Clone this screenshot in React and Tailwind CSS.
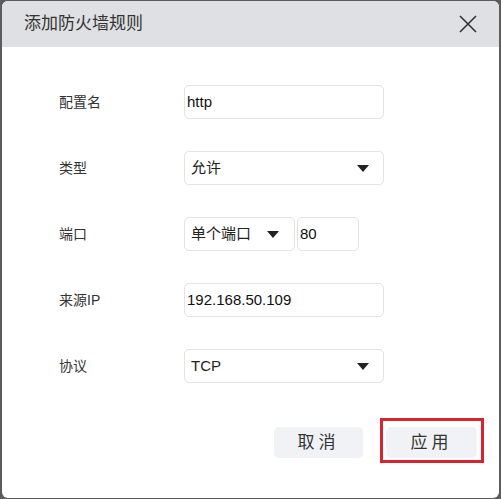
import React from "react";

const font = { fontFamily: '"Liberation Sans", "Noto Sans CJK SC", sans-serif' };

const Caret = () => (
  <svg width="12" height="7" viewBox="0 0 12 7" className="shrink-0">
    <path d="M0 0 L12 0 L6 7 Z" fill="#222" />
  </svg>
);

const Row = ({ label, children }) => (
  <div className="flex items-center h-[34px]">
    <div className="w-[125px] text-[14px] text-[#333]">{label}</div>
    {children}
  </div>
);

const Input = ({ value, w = "w-[200px]" }) => (
  <div className={`${w} h-[34px] flex items-center pl-[2px] rounded-[5px] border border-[#e3e3e3] bg-white text-[15px] text-[#111]`}>
    {value}
  </div>
);

const Select = ({ value, w = "w-[200px]", pr = "pr-[14px]" }) => (
  <div className={`${w} h-[34px] flex items-center justify-between pl-[6px] ${pr} rounded-[5px] border border-[#e3e3e3] bg-white text-[15px] text-[#222]`}>
    <span>{value}</span>
    <Caret />
  </div>
);

export default function App() {
  return (
    <div className="w-[501px] h-[499px] bg-[#5c5c5c] pt-[1px] pl-[2px] pr-[2px] pb-[1px]" style={font}>
      <div className="w-full h-full bg-white rounded-[6px] overflow-hidden flex flex-col">
        {/* Header */}
        <div className="h-[46px] bg-[#dfe0e3] flex items-center justify-between pl-[22px] pr-[22px] shrink-0">
          <span className="text-[17px] text-[#333]">添加防火墙规则</span>
          <svg width="18" height="18" viewBox="0 0 18 18">
            <path d="M1 1 L17 17 M17 1 L1 17" stroke="#333" strokeWidth="1.6" />
          </svg>
        </div>

        {/* Form */}
        <div className="pl-[57px] pt-[38px] flex flex-col gap-[32px]">
          <Row label="配置名">
            <Input value="http" />
          </Row>
          <Row label="类型">
            <Select value="允许" />
          </Row>
          <Row label="端口">
            <div className="flex gap-[2px]">
              <Select value="单个端口" w="w-[111px]" pr="pr-[15px]" />
              <Input value="80" w="w-[62px]" />
            </div>
          </Row>
          <Row label="来源IP">
            <Input value="192.168.50.109" />
          </Row>
          <Row label="协议">
            <Select value="TCP" />
          </Row>
        </div>

        {/* Footer */}
        <div className="flex justify-end items-end gap-[17px] pr-[15px] mt-[35px]">
          <button className="w-[89px] h-[31px] mb-[5px] rounded-[5px] bg-[#f0f2f5] text-[17px] text-[#333] tracking-[4px]">
            取消
          </button>
          <div className="border-[3px] border-[#d9232e] p-[6px] pl-[3px] pr-[4px] pb-[2px]">
            <button className="w-[91px] h-[31px] rounded-[5px] bg-[#f0f2f5] text-[17px] text-[#333] tracking-[4px]">
              应用
            </button>
          </div>
        </div>
      </div>
    </div>
  );
}
